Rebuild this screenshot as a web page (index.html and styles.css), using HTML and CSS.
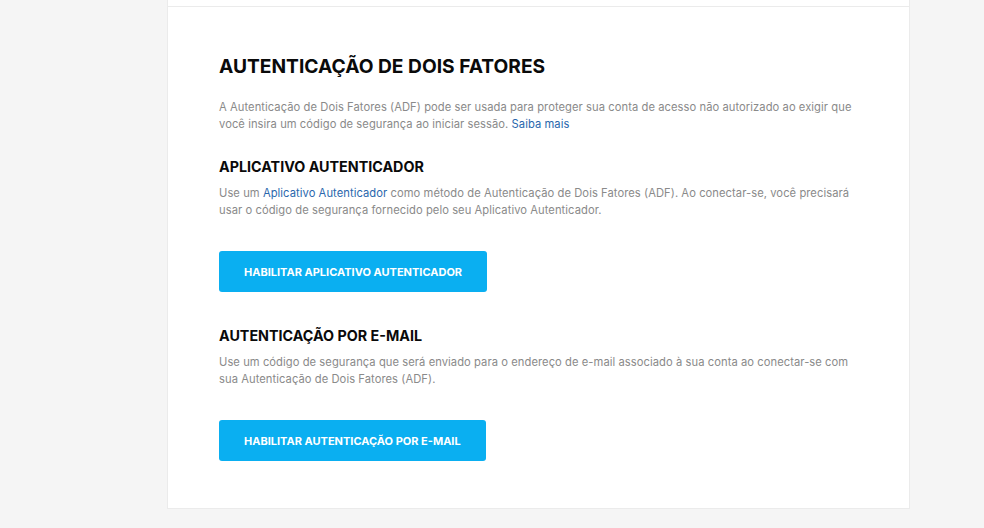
FILE: index.html
```html
<!DOCTYPE html>
<html lang="pt-BR">
<head>
    <meta charset="UTF-8">
    <meta name="viewport" content="width=device-width, initial-scale=1.0">
    <title>Autenticação de Dois Fatores</title>
    <link rel="stylesheet" href="styles.css">
</head>
<body>
    <div class="page">
        <div class="card">
            <div class="card-top"></div>

            <div class="card-body">
                <h1 class="title">AUTENTICAÇÃO DE DOIS FATORES</h1>
                <p class="text">A Autenticação de Dois Fatores (ADF) pode ser usada para proteger sua conta de acesso não autorizado ao exigir que<br>você insira um código de segurança ao iniciar sessão. <a href="#">Saiba mais</a></p>

                <h2 class="subtitle">APLICATIVO AUTENTICADOR</h2>
                <p class="text tight">Use um <a href="#">Aplicativo Autenticador</a> como método de Autenticação de Dois Fatores (ADF). Ao conectar-se, você precisará<br>usar o código de segurança fornecido pelo seu Aplicativo Autenticador.</p>
                <button class="btn">HABILITAR APLICATIVO AUTENTICADOR</button>

                <h2 class="subtitle second">AUTENTICAÇÃO POR E-MAIL</h2>
                <p class="text tight">Use um código de segurança que será enviado para o endereço de e-mail associado à sua conta ao conectar-se com<br>sua Autenticação de Dois Fatores (ADF).</p>
                <button class="btn">HABILITAR AUTENTICAÇÃO POR E-MAIL</button>
            </div>
        </div>
    </div>
</body>
</html>
```

FILE: styles.css
```css
body {
    margin: 0;
    background: #f5f5f5;
    font-family: 'Inter', 'Liberation Sans', sans-serif;
}

.page {
    padding-left: 167px;
}

.card {
    width: 741px;
    background: #fff;
    border: 1px solid #ebebeb;
    border-top: none;
}

.card-top {
    height: 6px;
    border-bottom: 1px solid #ebebeb;
}

.card-body {
    padding: 47px 30px 47px 51px;
}

.title {
    margin: 0;
    font-size: 19.2px;
    line-height: 24px;
    font-weight: 700;
    color: #0a0a0a;
}

.text {
    margin: 21px 0 0;
    font-size: 11.2px;
    line-height: 17px;
    letter-spacing: 0.06px;
    color: #8a8a8a;
    white-space: nowrap;
}

.text.tight {
    margin-top: 8px;
}

.text a {
    color: #2a67ad;
    text-decoration: none;
}

.subtitle {
    margin: 24px 0 0;
    font-size: 14.3px;
    line-height: 20px;
    font-weight: 700;
    color: #0a0a0a;
}

.subtitle.second {
    margin-top: 34px;
}

.btn {
    display: block;
    margin-top: 32px;
    height: 41px;
    padding: 0 25px;
    background: #0aaff1;
    color: #fff;
    border: none;
    border-radius: 3px;
    font-family: inherit;
    font-size: 11px;
    font-weight: 700;
    cursor: pointer;
}
```
